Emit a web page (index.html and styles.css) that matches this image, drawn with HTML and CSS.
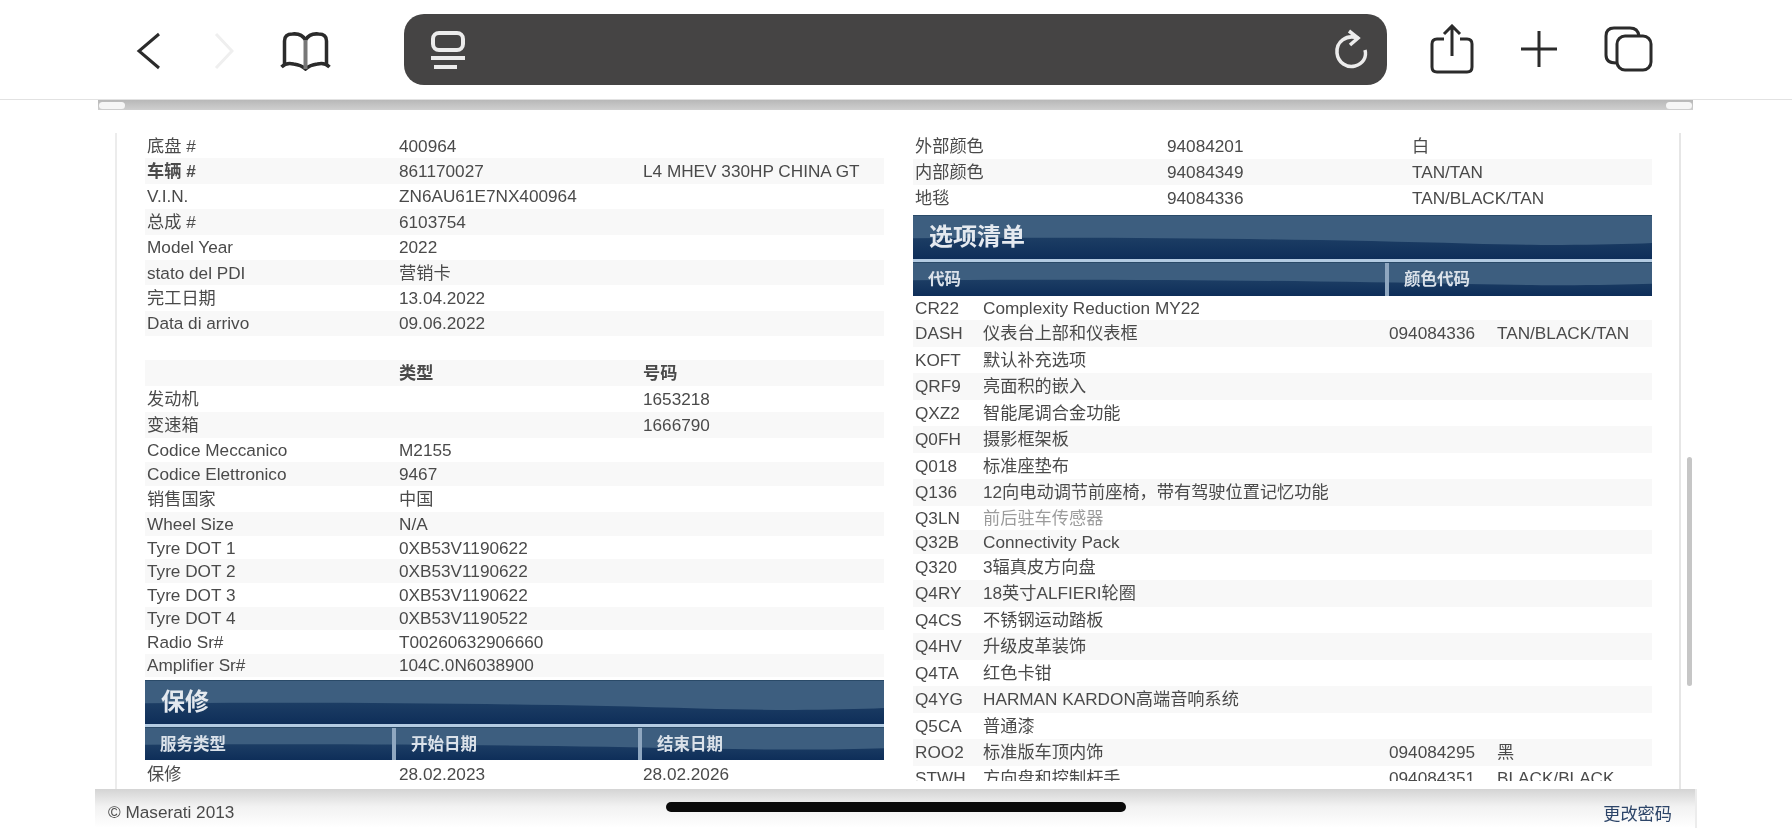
FILE: index.html
```html
<!DOCTYPE html>
<html lang="zh-CN">
<head>
    <meta charset="UTF-8">
    <meta name="viewport" content="width=device-width, initial-scale=1.0">
    <title>Maserati</title>
    <link rel="stylesheet" href="styles.css">
</head>
<body>

    <svg class="defs" width="0" height="0">
        <defs>
            <linearGradient id="waveFill" x1="0" y1="0" x2="0" y2="1">
                <stop offset="0" stop-color="#1c3d64"/>
                <stop offset="1" stop-color="#0e2e59"/>
            </linearGradient>
            <g id="wave">
                <path d="M0 52 C30 48 55 54 75 64 C85 69 94 68 100 63 V100 H0 Z" fill="url(#waveFill)"/>
            </g>
        </defs>
    </svg>

    <!-- Browser toolbar -->
    <header class="toolbar">
        <div class="nav-icons">
            <svg class="icon back" width="26" height="38" viewBox="0 0 26 38"><path d="M23 2 L3 19 L23 36"/></svg>
            <svg class="icon forward" width="20" height="38" viewBox="0 0 20 38"><path d="M2 2 L18 19 L2 36"/></svg>
            <svg class="icon book" width="54" height="40" viewBox="0 0 54 40">
                <path d="M6 34 V10 Q6 3 14 3 Q23 2 27 9 Q31 2 40 3 Q48 3 48 10 V34"/>
                <path d="M3 36 Q8 31 15 33 Q23 34 27 38 Q31 34 39 33 Q46 31 51 36"/>
                <path class="spine" d="M27 9 V38"/>
            </svg>
        </div>
        <div class="address-bar">
            <svg class="icon reader" width="36" height="38" viewBox="0 0 36 38">
                <rect x="3" y="2" width="30" height="17" rx="6"/>
                <path d="M1 27 H35 M4 36 H27"/>
            </svg>
            <svg class="icon reload" width="38" height="42" viewBox="0 0 38 42">
                <path d="M26 9 C14 5 4 13 5 24 C6 34 15 39 23 37 C31 35 35 28 33 21"/>
                <path d="M17 2 L26 9 L18 16"/>
            </svg>
        </div>
        <div class="action-icons">
            <svg class="icon share" width="44" height="50" viewBox="0 0 44 50">
                <path d="M14 15 H7 Q2 15 2 20 V43 Q2 48 7 48 H37 Q42 48 42 43 V20 Q42 15 37 15 H30"/>
                <path d="M22 32 V3 M14 10 L22 2 L30 10"/>
            </svg>
            <svg class="icon plus" width="38" height="38" viewBox="0 0 38 38"><path d="M19 1 V37 M1 19 H37"/></svg>
            <svg class="icon tabs" width="50" height="46" viewBox="0 0 50 46">
                <path d="M13 37 Q3 37 3 29 V10 Q3 2 11 2 H27 Q35 2 36 10"/>
                <rect x="14" y="10" width="34" height="34" rx="8"/>
            </svg>
        </div>
    </header>

    <div class="strip"></div>

    <main class="panel">
        <div class="content">

            <!-- Left column -->
            <section class="column">
                <div class="row"><span>底盘 #</span><span>400964</span><span></span></div>
                <div class="row"><span class="bold">车辆 #</span><span>861170027</span><span>L4 MHEV 330HP CHINA GT</span></div>
                <div class="row"><span>V.I.N.</span><span>ZN6AU61E7NX400964</span><span></span></div>
                <div class="row"><span>总成 #</span><span>6103754</span><span></span></div>
                <div class="row"><span>Model Year</span><span>2022</span><span></span></div>
                <div class="row"><span>stato del PDI</span><span>营销卡</span><span></span></div>
                <div class="row"><span>完工日期</span><span>13.04.2022</span><span></span></div>
                <div class="row"><span>Data di arrivo</span><span>09.06.2022</span><span></span></div>

                <div class="spacer"></div>

                <div class="rows-b">
                    <div class="row tall odd"><span></span><span class="bold">类型</span><span class="bold">号码</span></div>
                    <div class="row tall"><span>发动机</span><span></span><span>1653218</span></div>
                    <div class="row tall odd"><span>变速箱</span><span></span><span>1666790</span></div>
                    <div class="row mid"><span>Codice Meccanico</span><span>M2155</span><span></span></div>
                    <div class="row mid odd"><span>Codice Elettronico</span><span>9467</span><span></span></div>
                    <div class="row tall"><span>销售国家</span><span>中国</span><span></span></div>
                    <div class="row short odd"><span>Wheel Size</span><span>N/A</span><span></span></div>
                    <div class="row short"><span>Tyre DOT 1</span><span>0XB53V1190622</span><span></span></div>
                    <div class="row short odd"><span>Tyre DOT 2</span><span>0XB53V1190622</span><span></span></div>
                    <div class="row short"><span>Tyre DOT 3</span><span>0XB53V1190622</span><span></span></div>
                    <div class="row short odd"><span>Tyre DOT 4</span><span>0XB53V1190522</span><span></span></div>
                    <div class="row short"><span>Radio Sr#</span><span>T00260632906660</span><span></span></div>
                    <div class="row short odd"><span>Amplifier Sr#</span><span>104C.0N6038900</span><span></span></div>
                </div>

                <div class="band title left-band">
                    <svg class="wave" viewBox="0 0 100 100" preserveAspectRatio="none"><use href="#wave"/></svg>
                    <h2>保修</h2>
                </div>
                <div class="band heads three">
                    <svg class="wave" viewBox="0 0 100 100" preserveAspectRatio="none"><use href="#wave"/></svg>
                    <div class="head">服务类型</div>
                    <div class="head">开始日期</div>
                    <div class="head">结束日期</div>
                </div>
                <div class="row tall after-head"><span>保修</span><span>28.02.2023</span><span>28.02.2026</span></div>
            </section>

            <!-- Right column -->
            <section class="column right">
                <div class="row tall"><span>外部颜色</span><span>94084201</span><span>白</span></div>
                <div class="row tall"><span>内部颜色</span><span>94084349</span><span>TAN/TAN</span></div>
                <div class="row tall"><span>地毯</span><span>94084336</span><span>TAN/BLACK/TAN</span></div>

                <div class="band title right-band">
                    <svg class="wave" viewBox="0 0 100 100" preserveAspectRatio="none"><use href="#wave"/></svg>
                    <h2>选项清单</h2>
                </div>
                <div class="band heads two">
                    <svg class="wave" viewBox="0 0 100 100" preserveAspectRatio="none"><use href="#wave"/></svg>
                    <div class="head">代码</div>
                    <div class="head">颜色代码</div>
                </div>

                <div class="options">
                    <div class="option short"><span>CR22</span><span>Complexity Reduction MY22</span><span></span><span></span></div>
                    <div class="option"><span>DASH</span><span>仪表台上部和仪表框</span><span>094084336</span><span>TAN/BLACK/TAN</span></div>
                    <div class="option"><span>KOFT</span><span>默认补充选项</span><span></span><span></span></div>
                    <div class="option"><span>QRF9</span><span>亮面积的嵌入</span><span></span><span></span></div>
                    <div class="option"><span>QXZ2</span><span>智能尾调合金功能</span><span></span><span></span></div>
                    <div class="option"><span>Q0FH</span><span>摄影框架板</span><span></span><span></span></div>
                    <div class="option"><span>Q018</span><span>标准座垫布</span><span></span><span></span></div>
                    <div class="option"><span>Q136</span><span>12向电动调节前座椅，带有驾驶位置记忆功能</span><span></span><span></span></div>
                    <div class="option short"><span>Q3LN</span><span class="faint">前后驻车传感器</span><span></span><span></span></div>
                    <div class="option short"><span>Q32B</span><span>Connectivity Pack</span><span></span><span></span></div>
                    <div class="option"><span>Q320</span><span>3辐真皮方向盘</span><span></span><span></span></div>
                    <div class="option"><span>Q4RY</span><span>18英寸ALFIERI轮圈</span><span></span><span></span></div>
                    <div class="option"><span>Q4CS</span><span>不锈钢运动踏板</span><span></span><span></span></div>
                    <div class="option"><span>Q4HV</span><span>升级皮革装饰</span><span></span><span></span></div>
                    <div class="option"><span>Q4TA</span><span>红色卡钳</span><span></span><span></span></div>
                    <div class="option"><span>Q4YG</span><span>HARMAN KARDON高端音响系统</span><span></span><span></span></div>
                    <div class="option"><span>Q5CA</span><span>普通漆</span><span></span><span></span></div>
                    <div class="option"><span>ROO2</span><span>标准版车顶内饰</span><span>094084295</span><span>黑</span></div>
                    <div class="option short"><span>STWH</span><span>方向盘和控制杆手</span><span>094084351</span><span>BLACK/BLACK</span></div>
                </div>
            </section>
        </div>
        <div class="scroll-thumb"></div>
    </main>

    <footer class="footer">
        <span class="copyright">© Maserati 2013</span>
        <a class="change-pass">更改密码</a>
    </footer>

    <div class="home-indicator"></div>

</body>
</html>
```

FILE: styles.css
```css
* {
    box-sizing: border-box;
}

body {
    margin: 0;
    height: 828px;
    overflow: hidden;
    position: relative;
    display: flex;
    flex-direction: column;
    background-color: #fff;
    color: #4a4a4a;
    font-family: "Liberation Sans", "Noto Sans CJK SC", sans-serif;
    font-size: 17.2px;
    line-height: 18px;
}

.defs {
    position: absolute;
}

/* Toolbar */
.toolbar {
    height: 100px;
    flex: none;
    display: flex;
    align-items: flex-start;
    background-color: #fff;
    border-bottom: 1px solid #e2e2e2;
}

.icon {
    fill: none;
    stroke: #2b2b2b;
    stroke-width: 3;
    flex: none;
    filter: blur(0.5px);
}

.nav-icons {
    display: flex;
    align-items: center;
    width: 404px;
    padding: 31px 0 0 136px;
}

.forward {
    stroke: #efefef;
    margin-left: 52px;
}

.book {
    width: 57px;
    margin-left: 43px;
    stroke-width: 3.5;
}

.book .spine {
    stroke: #777;
    stroke-width: 4;
}

.address-bar {
    width: 983px;
    height: 71px;
    margin-top: 14px;
    display: flex;
    justify-content: space-between;
    align-items: center;
    padding: 0 17px 0 26px;
    background-color: #454444;
    border-radius: 20px;
}

.reader, .reload {
    stroke: #ececec;
}

.reader {
    stroke-width: 4;
}

.reload {
    stroke-width: 3.5;
}

.action-icons {
    display: flex;
    align-items: center;
    padding: 24px 0 0 43px;
}

.plus {
    margin-left: 46px;
    stroke-width: 3;
}

.tabs {
    margin-left: 45px;
}

/* Grey strip under the toolbar */
.strip {
    height: 10px;
    flex: none;
    margin: 0 99px 0 98px;
    position: relative;
    background: linear-gradient(#b8b8b8, #cfcfcf);
}

.strip::before, .strip::after {
    content: "";
    position: absolute;
    top: 2px;
    width: 26px;
    height: 7px;
    background-color: #f6f6f6;
    border-radius: 4px;
}

.strip::before {
    left: 1px;
}

.strip::after {
    right: 1px;
}

/* Main panel */
.panel {
    flex: none;
    height: 680px;
    position: relative;
    overflow: hidden;
}

.content {
    width: 1566px;
    height: 656px;
    margin: 23px 0 0 115px;
    padding: 0 27px 0 28px;
    display: flex;
    gap: 29px;
    border-left: 2px solid #ececec;
    border-right: 2px solid #e6e6e6;
    filter: blur(0.7px);
}

.column {
    width: 739px;
    flex: none;
}

.row {
    display: grid;
    grid-template-columns: 252px 244px 1fr;
    height: 25.4px;
    align-items: center;
    white-space: nowrap;
    padding-left: 2px;
}

.right .row {
    grid-template-columns: 252px 245px 1fr;
}

.row.tall {
    height: 26px;
}

.row.mid {
    height: 24px;
}

.row.short {
    height: 23.6px;
}

.column > .row:nth-child(even), .row.odd {
    background-color: #f8f8f8;
}

.bold {
    font-weight: bold;
}

.spacer {
    height: 24px;
}

/* Blue bands */
.band {
    position: relative;
    overflow: hidden;
    background-color: #3d5e7f;
    border-top: 1px solid #2a4a68;
    color: #e4e9ef;
}

.wave {
    position: absolute;
    left: 0;
    top: 0;
    width: 100%;
    height: 100%;
}

.band.title {
    height: 47px;
    border-bottom: 3px solid #b3cbe2;
}

.left-band {
    margin-top: 2.5px;
}

.right-band {
    margin-top: 4px;
}

.band h2 {
    position: relative;
    margin: 0;
    padding: 5px 0 0 16px;
    font-size: 24px;
    line-height: 32px;
    font-weight: bold;
}

.band.heads {
    display: grid;
    height: 33px;
}

.band.heads.three {
    grid-template-columns: 247px 246px 1fr;
}

.band.heads.two {
    height: 34px;
    grid-template-columns: 472px 1fr;
}

.head {
    position: relative;
    padding-left: 15px;
    line-height: 33px;
    font-size: 16.5px;
    font-weight: bold;
    color: #dbe2ea;
    border-left: 4px solid #8fa7c0;
}

.head:first-of-type {
    border-left: none;
}

.after-head {
    margin-top: 1px;
}

/* Option list, cut off by the scroll edge */
.options {
    height: 485px;
    overflow: hidden;
}

.option {
    display: grid;
    grid-template-columns: 68px 406px 108px 1fr;
    height: 26.5px;
    align-items: center;
    white-space: nowrap;
    padding-left: 2px;
}

.option.short {
    height: 24px;
}

.option:nth-child(even) {
    background-color: #f8f8f8;
}

.faint {
    opacity: 0.55;
}

.scroll-thumb {
    position: absolute;
    left: 1687px;
    top: 347px;
    width: 5px;
    height: 229px;
    background-color: #c6c6c6;
    border-radius: 3px;
}

/* Footer */
.footer {
    flex: 1;
    margin: -1px 95px 0 95px;
    display: flex;
    justify-content: space-between;
    align-items: flex-end;
    padding: 0 23px 5px 13px;
    background: linear-gradient(#d4d4d4, #f2f2f2 45%, #fff);
    border-right: 2px solid #ececec;
    filter: blur(0.7px);
}

.copyright {
    padding-bottom: 2px;
}

.change-pass {
    color: #2c4468;
}

.home-indicator {
    position: absolute;
    left: 666px;
    top: 802px;
    width: 460px;
    height: 10px;
    background-color: #0a0a0a;
    border-radius: 5px;
}
```
